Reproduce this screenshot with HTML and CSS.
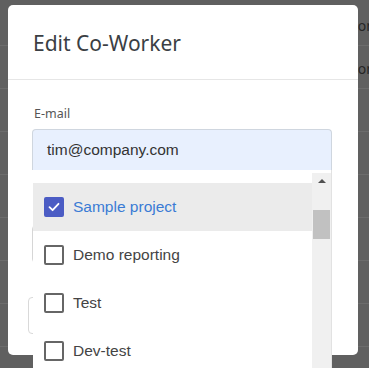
FILE: index.html
```html
<!DOCTYPE html>
<html>
<head>
    <title>Edit Co-Worker</title>
    <link rel="stylesheet" href="styles.css">
</head>
<body>
    <div class="page">
        <div class="row"><span class="cell">Controller</span></div>
        <div class="row"><span class="cell">Controller</span></div>
        <div class="row"></div>
        <div class="row"></div>
        <div class="row"></div>
        <div class="row"></div>
        <div class="row"></div>
        <div class="row"></div>
    </div>

    <div class="modal">
        <div class="modal-header">
            <h2>Edit Co-Worker</h2>
        </div>
        <div class="modal-body">
            <label class="field-label" for="email">E-mail</label>
            <div class="input" id="email">tim@company.com</div>
            <div class="select-box"></div>
        </div>
        <div class="modal-footer">
            <div class="btn"></div>
        </div>
    </div>

    <div class="dropdown">
        <ul class="options">
            <li class="option selected"><span class="check checked">
                <svg width="14" height="14" viewBox="0 0 14 14"><path d="M2.5 7.2 L5.6 10.2 L11.5 3.8" fill="none" stroke="#fff" stroke-width="1.8" stroke-linecap="round" stroke-linejoin="round"/></svg>
            </span>Sample project</li>
            <li class="option"><span class="check"></span>Demo reporting</li>
            <li class="option"><span class="check"></span>Test</li>
            <li class="option"><span class="check"></span>Dev-test</li>
        </ul>
        <div class="scrollbar">
            <div class="arrow"></div>
            <div class="thumb"></div>
        </div>
    </div>
</body>
</html>
```
FILE: styles.css
```css
body {
    margin: 0;
    padding: 0;
    background-color: #606060;
    font-family: "Liberation Sans", Arial, sans-serif;
    overflow: hidden;
    height: 368px;
}

.page {
    padding-top: 3px;
}

.row {
    height: 42px;
    border-bottom: 1px solid #6c6c6c;
    display: flex;
    align-items: center;
    padding-left: 349px;
    white-space: nowrap;
    overflow: hidden;
}

.cell {
    font-family: "Noto Sans", sans-serif;
    font-size: 14px;
    color: #262626;
    padding-top: 3px;
}

.modal {
    position: absolute;
    left: 8px;
    top: 5px;
    width: 350px;
    height: 350px;
    background-color: #fff;
    border-radius: 5px;
    display: flex;
    flex-direction: column;
    font-family: "Noto Sans", sans-serif;
}

.modal-header {
    height: 74px;
    border-bottom: 1px solid #e6e6e6;
    display: flex;
    align-items: center;
    padding-left: 25px;
}

h2 {
    margin: 0;
    font-weight: normal;
    font-size: 21px;
    color: #3b3f44;
    padding-top: 1px;
}

.modal-body {
    padding: 25px 26px 0 24px;
}

.field-label {
    display: block;
    font-size: 12.5px;
    color: #555;
    margin-left: 2px;
    margin-bottom: 7px;
}

.input {
    height: 40px;
    background-color: #e8f0fe;
    border: 1px solid #cfd6df;
    border-bottom: none;
    border-radius: 4px 4px 0 0;
    padding-left: 14px;
    display: flex;
    align-items: center;
    font-family: "Liberation Sans", Arial, sans-serif;
    font-size: 15.5px;
    color: #333;
}

.select-box {
    margin-top: 55px;
    height: 36px;
    border: 1px solid #d6d6d6;
    border-radius: 4px;
}

.modal-footer {
    margin-top: auto;
    padding: 0 20px 21px 20px;
}

.btn {
    width: 80px;
    height: 35px;
    border: 1px solid #d9d9d9;
    border-radius: 4px;
}

.dropdown {
    position: absolute;
    left: 33px;
    top: 170px;
    width: 298px;
    height: 198px;
    overflow: hidden;
    background-color: #fff;
    border-right: 1px solid #e2e2e2;
    display: flex;
}

.options {
    list-style: none;
    margin: 0;
    padding: 13px 0 0 0;
    flex: 1;
}

.option {
    height: 48px;
    display: flex;
    align-items: center;
    padding-left: 11px;
    font-size: 15.5px;
    color: #444;
}

.option.selected {
    background-color: #ebebeb;
    color: #3a7bd5;
}

.check {
    width: 16px;
    height: 16px;
    border: 2px solid #666;
    border-radius: 2px;
    margin-right: 9px;
    display: flex;
    align-items: center;
    justify-content: center;
}

.check.checked {
    background-color: #4b5cc4;
    border-color: #4b5cc4;
}

.scrollbar {
    width: 19px;
    background-color: #f0f0f0;
    margin-top: 3px;
    display: flex;
    flex-direction: column;
    align-items: center;
}

.arrow {
    margin-top: 6px;
    width: 0;
    height: 0;
    border-left: 4px solid transparent;
    border-right: 4px solid transparent;
    border-bottom: 4px solid #505050;
}

.thumb {
    margin-top: 27px;
    width: 17px;
    height: 29px;
    background-color: #c1c1c1;
}
```
